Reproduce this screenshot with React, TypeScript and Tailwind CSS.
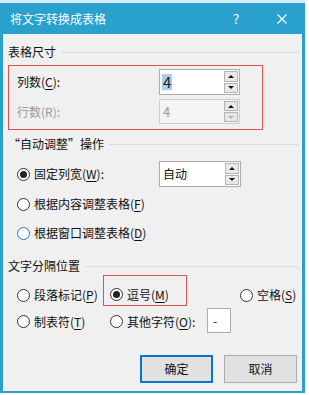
import React from "react";

const Radio = ({ checked = false, blue = false }: { checked?: boolean; blue?: boolean }) => (
  <div
    className={`w-[13px] h-[13px] rounded-full border bg-white flex items-center justify-center shrink-0 ${
      blue ? "border-[#1e7ad0]" : "border-[#333333]"
    }`}
  >
    {checked && <div className="w-[7px] h-[7px] rounded-full bg-[#222222]" />}
  </div>
);

const Up = ({ dim = false }: { dim?: boolean }) => (
  <div className={`w-0 h-0 border-x-[3px] border-x-transparent border-b-[3px] ${dim ? "border-b-[#b0b0b0]" : "border-b-[#111111]"}`} />
);
const Down = ({ dim = false }: { dim?: boolean }) => (
  <div className={`w-0 h-0 border-x-[3px] border-x-transparent border-t-[3px] ${dim ? "border-t-[#b0b0b0]" : "border-t-[#111111]"}`} />
);

const SpinButtons = ({ disabled = false }: { disabled?: boolean }) => (
  <div className="flex flex-col gap-[1px] py-[1px] pr-[1px] h-full">
    <div className="w-[14px] flex-1 border border-[#b4b4b4] bg-[#e8e8e8] flex items-center justify-center">
      <Up />
    </div>
    <div className="w-[14px] flex-1 border border-[#b4b4b4] bg-[#e8e8e8] flex items-center justify-center">
      <Down dim={disabled} />
    </div>
  </div>
);

const Heading = ({ children }: { children: React.ReactNode }) => (
  <div className="h-[16px] flex items-center">
    <span className="leading-[16px] whitespace-nowrap">{children}</span>
    <div className="flex-1 h-px bg-[#dadada] ml-[5px] mr-[4px]" />
  </div>
);

const U = ({ children }: { children: React.ReactNode }) => <span className="underline underline-offset-2">{children}</span>;

export default function App() {
  return (
    <div className="w-[309px] h-[395px] bg-white font-['Noto_Sans_CJK_SC','Microsoft_YaHei',sans-serif] text-[12px] text-[#111111]">
      <div className="w-[305px] h-[393px] bg-[#2aa0cd] flex flex-col px-[3px] pb-[2px]">
        <div className="h-[3px] -mx-[3px] bg-[#d6ecf6]" />
        <div className="h-[31px] flex items-center text-white">
          <span className="flex-1 pl-[7px] text-[12px] leading-[16px]">将文字转换成表格</span>
          <span className="w-[10px] text-center text-[13px] leading-[16px]">?</span>
          <div className="w-[40px] ml-[21px] flex justify-center items-center">
            <svg width="10" height="10" viewBox="0 0 10 10">
              <path d="M0.5 0.5 L9.5 9.5 M9.5 0.5 L0.5 9.5" stroke="white" strokeWidth="1.2" />
            </svg>
          </div>
        </div>
        <div className="flex-1 bg-[#f0f0f0] flex flex-col pl-[5px]">
          <div className="mt-[10px]">
            <Heading>表格尺寸</Heading>
          </div>
          <div className="mt-[5px] w-[255px] h-[65px] border border-[#d9534f] flex flex-col pt-[3px]">
            <div className="h-[26px] flex items-center">
              <div className="w-[150px] pl-[8px]">
                列数(<U>C</U>):
              </div>
              <div className="w-[81px] h-full flex border border-[#acacac] bg-white">
                <div className="flex-1 flex items-center pl-[2px]">
                  <span className="bg-[#a8cdea] text-[15px] leading-[16px] px-[1px] text-[#222]">4</span>
                </div>
                <SpinButtons />
              </div>
            </div>
            <div className="h-[25px] mt-[4px] flex items-center">
              <div className="w-[150px] pl-[8px] text-[#9a9a9a]">行数(R):</div>
              <div className="w-[81px] h-full flex border border-[#cccccc] bg-[#f4f4f4]">
                <div className="flex-1 flex items-center pl-[3px] text-[#9a9a9a] text-[13px]">4</div>
                <SpinButtons disabled />
              </div>
            </div>
          </div>
          <div className="mt-[6px]">
            <Heading>“自动调整”操作</Heading>
          </div>
          <div className="mt-[9px] h-[26px] flex items-center">
            <div className="w-[151px] pl-[9px] flex items-center gap-[4px]">
              <Radio checked />
              <span>
                固定列宽(<U>W</U>):
              </span>
            </div>
            <div className="w-[82px] h-full flex border border-[#acacac] bg-white">
              <div className="flex-1 flex items-center pl-[3px]">自动</div>
              <SpinButtons />
            </div>
          </div>
          <div className="mt-[7px] h-[20px] flex items-center pl-[9px] gap-[4px]">
            <Radio />
            <span>
              根据内容调整表格(<U>F</U>)
            </span>
          </div>
          <div className="mt-[9px] h-[20px] flex items-center pl-[9px] gap-[4px]">
            <Radio blue />
            <span>
              根据窗口调整表格(<U>D</U>)
            </span>
          </div>
          <div className="mt-[15px]">
            <Heading>文字分隔位置</Heading>
          </div>
          <div className="mt-[1px] h-[31px] flex">
            <div className="w-[95px] pl-[9px] pt-[9px] flex items-center gap-[4px]">
              <Radio />
              <span>
                段落标记(<U>P</U>)
              </span>
            </div>
            <div className="w-[84px] h-[31px] border border-[#d9534f] pl-[6px] pt-[8px] flex items-center gap-[4px]">
              <Radio checked />
              <span>
                逗号(<U>M</U>)
              </span>
            </div>
            <div className="ml-[53px] pt-[9px] flex items-center gap-[4px]">
              <Radio />
              <span>
                空格(<U>S</U>)
              </span>
            </div>
          </div>
          <div className="mt-[2px] h-[25px] flex items-center">
            <div className="w-[95px] pl-[9px] pt-[2px] flex items-center gap-[4px]">
              <Radio />
              <span>
                制表符(<U>T</U>)
              </span>
            </div>
            <div className="w-[104px] pl-[7px] pt-[2px] flex items-center gap-[4px]">
              <Radio />
              <span>
                其他字符(<U>O</U>):
              </span>
            </div>
            <div className="w-[24px] h-[25px] border border-[#acacac] bg-white flex items-center pl-[5px]">-</div>
          </div>
          <div className="mt-[22px] h-[28px] flex">
            <div className="ml-[132px] w-[73px] h-full border-2 border-[#0a74d0] bg-[#e1e1e1] flex items-center justify-center">
              确定
            </div>
            <div className="ml-[11px] w-[73px] h-full border border-[#adadad] bg-[#e1e1e1] flex items-center justify-center">
              取消
            </div>
          </div>
        </div>
      </div>
    </div>
  );
}
